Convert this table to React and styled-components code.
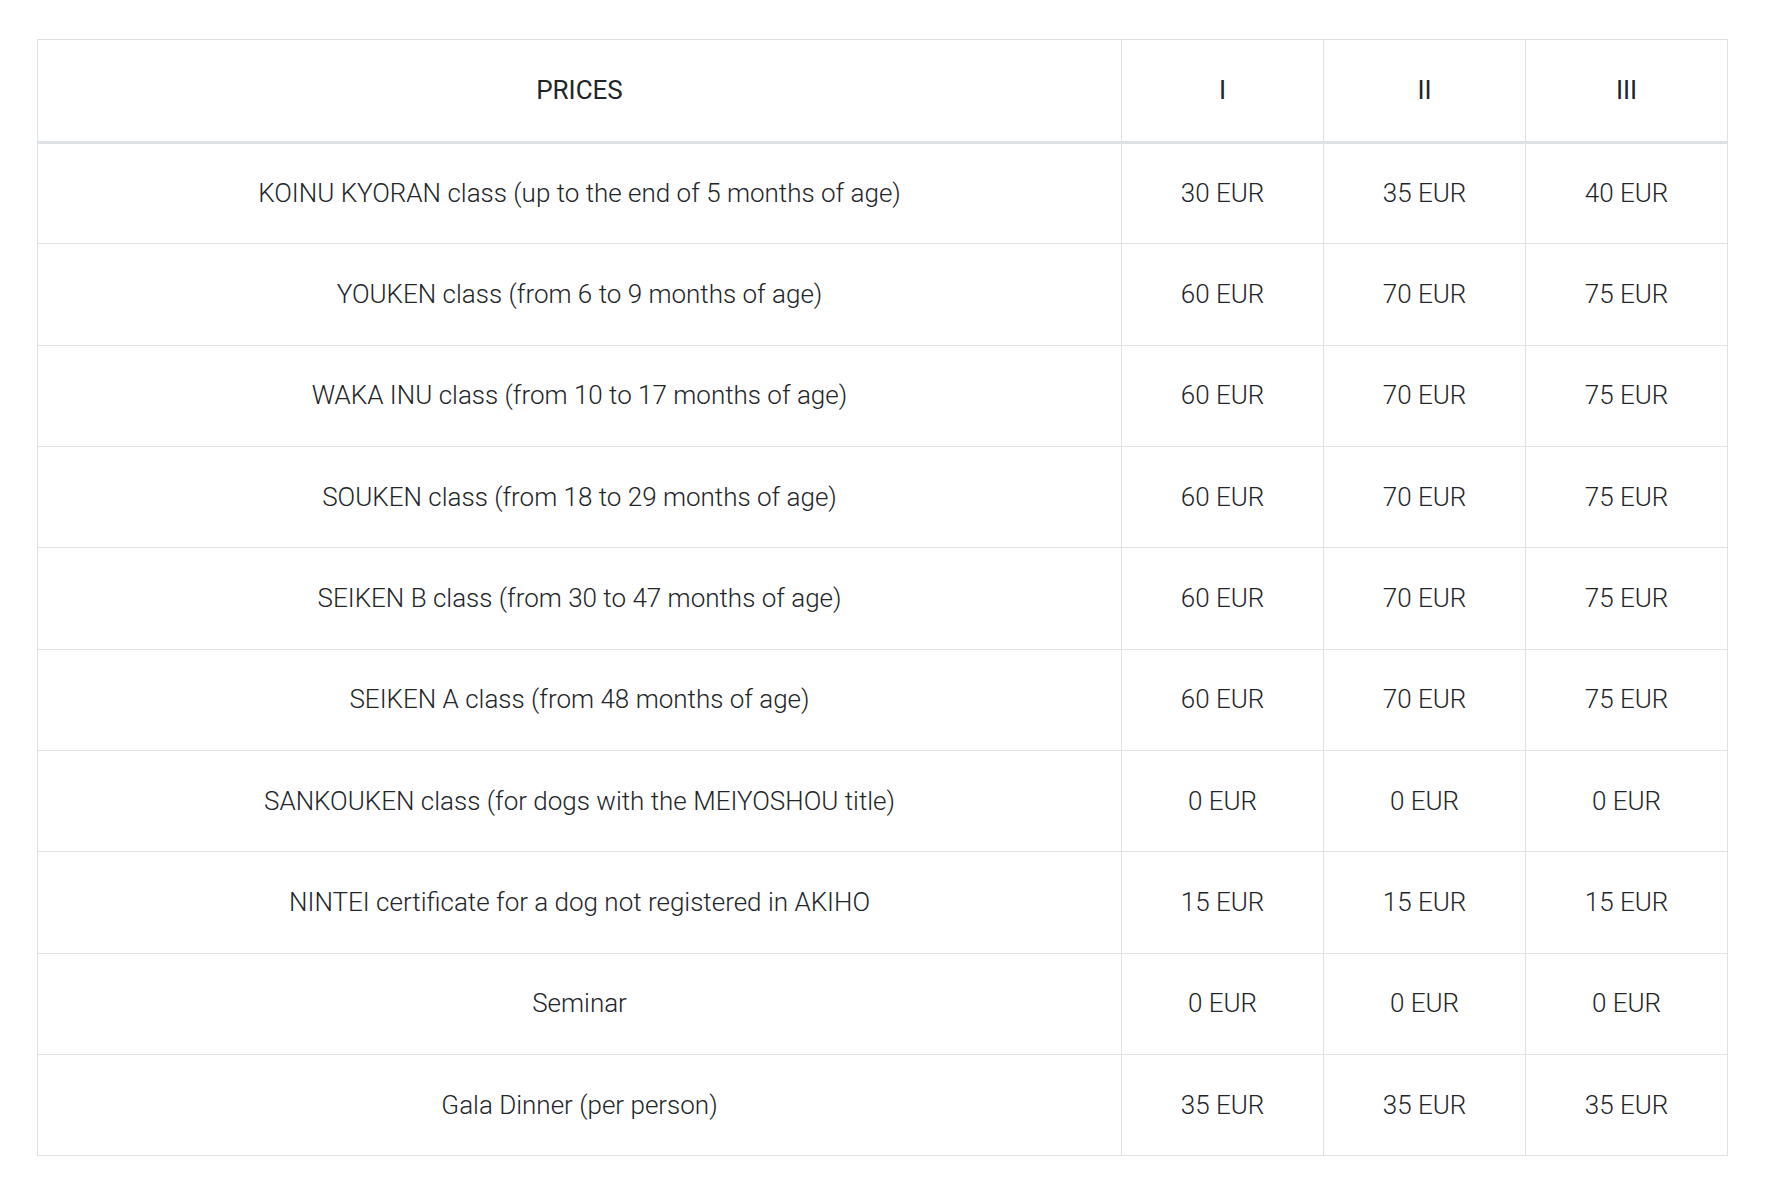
import React from 'react';
import styled, { createGlobalStyle } from 'styled-components';

const GlobalStyle = createGlobalStyle`
  html, body {
    margin: 0;
    padding: 0;
    background: #fff;
  }
  body {
    font-family: Roboto, 'Noto Sans', Arial, sans-serif;
    color: #212529;
  }
`;

const prices = [
  { name: 'KOINU KYORAN class (up to the end of 5 months of age)', values: [30, 35, 40] },
  { name: 'YOUKEN class (from 6 to 9 months of age)', values: [60, 70, 75] },
  { name: 'WAKA INU class (from 10 to 17 months of age)', values: [60, 70, 75] },
  { name: 'SOUKEN class (from 18 to 29 months of age)', values: [60, 70, 75] },
  { name: 'SEIKEN B class (from 30 to 47 months of age)', values: [60, 70, 75] },
  { name: 'SEIKEN A class (from 48 months of age)', values: [60, 70, 75] },
  { name: 'SANKOUKEN class (for dogs with the MEIYOSHOU title)', values: [0, 0, 0] },
  { name: 'NINTEI certificate for a dog not registered in AKIHO', values: [15, 15, 15] },
  { name: 'Seminar', values: [0, 0, 0] },
  { name: 'Gala Dinner (per person)', values: [35, 35, 35] },
];

const Page = styled.main`
  padding: 39px 42px 40px 37px;
`;

const Table = styled.table`
  width: 1690px;
  border-collapse: collapse;
  table-layout: fixed;
  font-size: 26px;
  line-height: 39px;
  color: #212529;
`;

const HeadCell = styled.th`
  width: ${({ $w }) => $w}px;
  height: 103px;
  padding: 0 10px;
  box-sizing: border-box;
  border: 1px solid #dee2e6;
  border-bottom: 3px solid #dee2e6;
  text-align: center;
  vertical-align: middle;
  font-weight: 400;
`;

const Cell = styled.td`
  height: 101.35px;
  padding: 0 10px;
  box-sizing: border-box;
  border: 1px solid #dee2e6;
  text-align: center;
  vertical-align: middle;
  font-weight: 300;
`;

export default function App() {
  return (
    <>
      <GlobalStyle />
      <Page>
        <Table>
          <thead>
            <tr>
              <HeadCell $w={1084}>PRICES</HeadCell>
              <HeadCell $w={202}>I</HeadCell>
              <HeadCell $w={202}>II</HeadCell>
              <HeadCell $w={202}>III</HeadCell>
            </tr>
          </thead>
          <tbody>
            {prices.map((row) => (
              <tr key={row.name}>
                <Cell>{row.name}</Cell>
                {row.values.map((v, i) => (
                  <Cell key={i}>{v} EUR</Cell>
                ))}
              </tr>
            ))}
          </tbody>
        </Table>
      </Page>
    </>
  );
}
